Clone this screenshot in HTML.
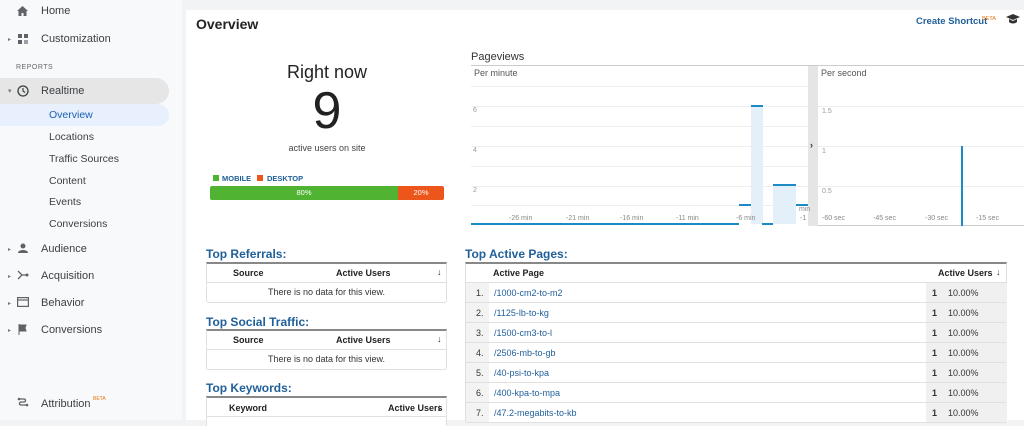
<!DOCTYPE html>
<html><head><meta charset="utf-8"><style>
*{margin:0;padding:0;box-sizing:border-box}
body{width:1024px;height:420px;overflow:hidden;background:#f1f3f4;font-family:"Liberation Sans",sans-serif;position:relative;color:#333}
.a{position:absolute;white-space:nowrap}
#side{position:absolute;left:0;top:0;width:182px;height:420px;background:#f8f9fa}
.nav{font-size:11px;color:#3c4043}
.sub{font-size:10.5px;color:#3c4043;left:49px}
.ar{position:absolute;left:8px;color:#777;font-size:6px}
#main{position:absolute;left:186px;top:10px;width:838px;height:410px;background:#fff}
.h{color:#1f5f9a;font-weight:bold;font-size:12px}
.tb{position:absolute;border-top:2px solid #888;background:#fff}
.th{font-size:9px;font-weight:bold;color:#222}
.row{position:absolute;left:0;right:0;height:20px;border-bottom:1px solid #e0e0e0;font-size:9px}
.gl{position:absolute;height:1px;background:#eee}
.yl{font-size:7px;color:#999}
.xl{font-size:7px;color:#888}
</style></head><body>
<div id="side">
<div class="a nav" style="left:41px;top:5px">Home</div>
<svg class="a" style="left:17px;top:6px" width="11" height="10" viewBox="0 0 11 10"><path d="M5.5 0L0 5h1.5v5h3V7h2v3h3V5H11z" fill="#5f6368"/></svg>
<div class="ar" style="top:36px">▸</div>
<svg class="a" style="left:18px;top:34px" width="10" height="10"><rect width="4" height="4" fill="#5f6368"/><rect x="6" width="4" height="4" fill="#5f6368"/><rect y="6" width="4" height="4" fill="#5f6368"/><rect x="6" y="6" width="4" height="4" fill="#9aa0a6"/></svg>
<div class="a nav" style="left:41px;top:33px">Customization</div>
<div class="a" style="left:16px;top:64px;font-size:7px;color:#666;letter-spacing:.5px">REPORTS</div>
<div class="a" style="left:0;top:78px;width:169px;height:26px;background:#e6e6e6;border-radius:0 13px 13px 0"></div>
<div class="a" style="left:0;top:104px;width:169px;height:22px;background:#e8f0fe;border-radius:0 11px 11px 0"></div>
<div class="ar" style="top:87px;font-size:7px">▾</div>
<svg class="a" style="left:17px;top:85px" width="12" height="12"><circle cx="6" cy="6" r="5" fill="none" stroke="#3c4043" stroke-width="1.3"/><path d="M6 3v3l2 1.5" fill="none" stroke="#3c4043" stroke-width="1.2"/></svg>
<div class="a nav" style="left:41px;top:85px">Realtime</div>
<div class="a sub" style="top:109px;color:#1a5fb4">Overview</div>
<div class="a sub" style="top:131px">Locations</div>
<div class="a sub" style="top:153px">Traffic Sources</div>
<div class="a sub" style="top:175px">Content</div>
<div class="a sub" style="top:196px">Events</div>
<div class="a sub" style="top:218px">Conversions</div>
<div class="ar" style="top:246px">▸</div>
<svg class="a" style="left:18px;top:243px" width="10" height="10"><circle cx="5" cy="3" r="2.5" fill="#5f6368"/><path d="M0 10c0-4 10-4 10 0z" fill="#5f6368"/></svg>
<div class="a nav" style="left:41px;top:243px">Audience</div>
<div class="ar" style="top:273px">▸</div>
<svg class="a" style="left:17px;top:270px" width="12" height="10"><path d="M1 1l4 4-4 4M5 5h6" fill="none" stroke="#5f6368" stroke-width="1.3"/><circle cx="10" cy="5" r="1.5" fill="#5f6368"/></svg>
<div class="a nav" style="left:41px;top:270px">Acquisition</div>
<div class="ar" style="top:300px">▸</div>
<svg class="a" style="left:17px;top:297px" width="12" height="10"><rect x=".6" y=".6" width="10.8" height="8.8" fill="none" stroke="#5f6368" stroke-width="1.2"/><path d="M1 3h10" stroke="#5f6368" stroke-width="1.2"/></svg>
<div class="a nav" style="left:41px;top:297px">Behavior</div>
<div class="ar" style="top:327px">▸</div>
<svg class="a" style="left:18px;top:324px" width="10" height="11"><path d="M1 0v11M1 1h7l-1 3 1 3H1" fill="#5f6368" stroke="#5f6368"/></svg>
<div class="a nav" style="left:41px;top:324px">Conversions</div>
<svg class="a" style="left:17px;top:397px" width="12" height="12"><path d="M2 2h5c2 0 2 3 0 3H4c-2 0-2 3 0 3h6" fill="none" stroke="#5f6368" stroke-width="1.3"/><circle cx="2" cy="2" r="1.3" fill="#5f6368"/><circle cx="10" cy="8" r="1.3" fill="#5f6368"/></svg>
<div class="a nav" style="left:41px;top:398px">Attribution</div>
<div class="a" style="left:93px;top:396px;font-size:5px;color:#e8710a">BETA</div>
</div>

<div id="main"></div>
<div class="a" style="left:196px;top:16px;font-size:14px;font-weight:bold;color:#222">Overview</div>
<div class="a" style="left:916px;top:16px;font-size:9.5px;font-weight:bold;color:#1f5f9a">Create Shortcut</div>
<div class="a" style="left:982px;top:16px;font-size:5.5px;color:#e8710a">BETA</div>
<svg class="a" style="left:1006px;top:14px" width="14" height="10"><path d="M7 0L0 3l7 3 7-3zM3 5v3c2 2 6 2 8 0V5L7 7z" fill="#333"/></svg>

<div class="a" style="left:207px;top:62px;width:240px;text-align:center;font-size:18px;color:#222">Right now</div>
<div class="a" style="left:207px;top:83px;width:240px;text-align:center;font-size:52px;line-height:56px;color:#222">9</div>
<div class="a" style="left:207px;top:143px;width:240px;text-align:center;font-size:9px;color:#444">active users on site</div>
<div class="a" style="left:213px;top:175px;width:6px;height:6px;background:#50b432"></div>
<div class="a" style="left:222px;top:174px;font-size:7.5px;font-weight:bold;color:#1f5f9a">MOBILE</div>
<div class="a" style="left:257px;top:175px;width:6px;height:6px;background:#ed561b"></div>
<div class="a" style="left:267px;top:174px;font-size:7.5px;font-weight:bold;color:#1f5f9a">DESKTOP</div>
<div class="a" style="left:210px;top:186px;width:188px;height:14px;background:#50b432;border-radius:2px 0 0 2px;color:#fff;font-size:7.5px;text-align:center;line-height:14px">80%</div>
<div class="a" style="left:398px;top:186px;width:46px;height:14px;background:#ed561b;border-radius:0 2px 2px 0;color:#fff;font-size:7.5px;text-align:center;line-height:14px">20%</div>

<div class="a" style="left:471px;top:51px;font-size:11px;color:#333">Pageviews</div>
<div class="a" style="left:471px;top:65px;width:553px;height:1px;background:#ccc"></div>
<div class="a" style="left:474px;top:68px;font-size:9px;color:#555">Per minute</div>
<div class="a" style="left:821px;top:68px;font-size:9px;color:#555">Per second</div>
<div class="a" style="left:808px;top:66px;width:10px;height:160px;background:#e5e5e5"></div>
<div class="a" style="left:810px;top:140px;font-size:9px;font-weight:bold">›</div>
<div class="gl" style="left:471px;top:86px;width:337px"></div>
<div class="gl" style="left:471px;top:106px;width:337px"></div>
<div class="gl" style="left:471px;top:126px;width:337px"></div>
<div class="gl" style="left:471px;top:146px;width:337px"></div>
<div class="gl" style="left:471px;top:166px;width:337px"></div>
<div class="gl" style="left:471px;top:186px;width:337px"></div>
<div class="gl" style="left:471px;top:205px;width:337px"></div>
<div class="gl" style="left:818px;top:106px;width:206px"></div>
<div class="gl" style="left:818px;top:146px;width:206px"></div>
<div class="gl" style="left:818px;top:186px;width:206px"></div>
<div class="a yl" style="left:473px;top:107px">6</div>
<div class="a yl" style="left:473px;top:147px">4</div>
<div class="a yl" style="left:473px;top:187px">2</div>
<div class="a yl" style="left:822px;top:108px">1.5</div>
<div class="a yl" style="left:822px;top:148px">1</div>
<div class="a yl" style="left:822px;top:188px">0.5</div>
<div class="a" style="left:751px;top:105px;width:12px;height:119px;background:#e3f0f9;border-top:2px solid #1c8ac6"></div>
<div class="a" style="left:739px;top:204px;width:12px;height:2px;background:#1c8ac6"></div>
<div class="a" style="left:773px;top:184px;width:23px;height:40px;background:#e3f0f9;border-top:2px solid #1c8ac6"></div>
<div class="a" style="left:796px;top:204px;width:12px;height:2px;background:#1c8ac6"></div>
<div class="a" style="left:471px;top:223px;width:268px;height:2px;background:#1c8ac6"></div>
<div class="a" style="left:762px;top:223px;width:11px;height:2px;background:#1c8ac6"></div>
<div class="a" style="left:818px;top:225px;width:206px;height:1px;background:#ccc"></div>
<div class="a" style="left:961px;top:146px;width:2px;height:80px;background:#1c8ac6"></div>
<div class="a xl" style="left:509px;top:215px">-26 min</div>
<div class="a xl" style="left:566px;top:215px">-21 min</div>
<div class="a xl" style="left:620px;top:215px">-16 min</div>
<div class="a xl" style="left:676px;top:215px">-11 min</div>
<div class="a xl" style="left:736px;top:215px">-6 min</div>
<div class="a xl" style="left:799px;top:206px">min</div>
<div class="a xl" style="left:800px;top:215px">-1</div>
<div class="a xl" style="left:822px;top:215px">-60 sec</div>
<div class="a xl" style="left:873px;top:215px">-45 sec</div>
<div class="a xl" style="left:925px;top:215px">-30 sec</div>
<div class="a xl" style="left:976px;top:215px">-15 sec</div>

<div class="a h" style="left:206px;top:247px">Top Referrals:</div>
<div class="tb" style="left:206px;top:262px;width:241px;height:40px;border-left:1px solid #e0e0e0;border-right:1px solid #e0e0e0">
<div class="row" style="top:0;height:19px"><span class="a th" style="left:26px;top:4px">Source</span><span class="a th" style="left:129px;top:4px">Active Users</span><span class="a" style="left:230px;top:3px;font-size:9px">↓</span></div>
<div class="row" style="top:19px;text-align:center;line-height:19px;color:#333">There is no data for this view.</div></div>
<div class="a h" style="left:206px;top:315px">Top Social Traffic:</div>
<div class="tb" style="left:206px;top:329px;width:241px;height:40px;border-left:1px solid #e0e0e0;border-right:1px solid #e0e0e0">
<div class="row" style="top:0;height:19px"><span class="a th" style="left:26px;top:4px">Source</span><span class="a th" style="left:129px;top:4px">Active Users</span><span class="a" style="left:230px;top:3px;font-size:9px">↓</span></div>
<div class="row" style="top:19px;text-align:center;line-height:19px;color:#333">There is no data for this view.</div></div>
<div class="a h" style="left:206px;top:381px">Top Keywords:</div>
<div class="tb" style="left:206px;top:396px;width:241px;height:30px;border-left:1px solid #e0e0e0;border-right:1px solid #e0e0e0">
<div class="row" style="top:0;height:19px"><span class="a th" style="left:22px;top:5px">Keyword</span><span class="a th" style="left:181px;top:5px">Active Users</span><span class="a" style="left:230px;top:4px;font-size:9px">↓</span></div></div>

<div class="a h" style="left:465px;top:247px">Top Active Pages:</div>
<div class="tb" style="left:465px;top:262px;width:542px;height:160px;border-left:1px solid #e0e0e0;border-right:1px solid #e0e0e0">
<div class="row" style="top:0;height:19px"><span class="a th" style="left:27px;top:4px">Active Page</span><span class="a th" style="left:472px;top:4px">Active Users</span><span class="a" style="left:530px;top:3px;font-size:9px">↓</span></div>
<div class="a" style="left:0;top:19px;width:23px;height:141px;background:#f3f3f3"></div>
<div class="a" style="left:460px;top:19px;width:81px;height:141px;background:#f0f0f0"></div>
<div class="row" style="top:19px"><span class="a" style="left:10px;top:5px">1.</span><span class="a" style="left:28px;top:5px;color:#1f5f9a">/1000-cm2-to-m2</span><span class="a" style="left:466px;top:5px;font-weight:bold">1</span><span class="a" style="left:482px;top:5px">10.00%</span></div>
<div class="row" style="top:39px"><span class="a" style="left:10px;top:5px">2.</span><span class="a" style="left:28px;top:5px;color:#1f5f9a">/1125-lb-to-kg</span><span class="a" style="left:466px;top:5px;font-weight:bold">1</span><span class="a" style="left:482px;top:5px">10.00%</span></div>
<div class="row" style="top:59px"><span class="a" style="left:10px;top:5px">3.</span><span class="a" style="left:28px;top:5px;color:#1f5f9a">/1500-cm3-to-l</span><span class="a" style="left:466px;top:5px;font-weight:bold">1</span><span class="a" style="left:482px;top:5px">10.00%</span></div>
<div class="row" style="top:79px"><span class="a" style="left:10px;top:5px">4.</span><span class="a" style="left:28px;top:5px;color:#1f5f9a">/2506-mb-to-gb</span><span class="a" style="left:466px;top:5px;font-weight:bold">1</span><span class="a" style="left:482px;top:5px">10.00%</span></div>
<div class="row" style="top:99px"><span class="a" style="left:10px;top:5px">5.</span><span class="a" style="left:28px;top:5px;color:#1f5f9a">/40-psi-to-kpa</span><span class="a" style="left:466px;top:5px;font-weight:bold">1</span><span class="a" style="left:482px;top:5px">10.00%</span></div>
<div class="row" style="top:119px"><span class="a" style="left:10px;top:5px">6.</span><span class="a" style="left:28px;top:5px;color:#1f5f9a">/400-kpa-to-mpa</span><span class="a" style="left:466px;top:5px;font-weight:bold">1</span><span class="a" style="left:482px;top:5px">10.00%</span></div>
<div class="row" style="top:139px"><span class="a" style="left:10px;top:5px">7.</span><span class="a" style="left:28px;top:5px;color:#1f5f9a">/47.2-megabits-to-kb</span><span class="a" style="left:466px;top:5px;font-weight:bold">1</span><span class="a" style="left:482px;top:5px">10.00%</span></div>
</div>
</body></html>
